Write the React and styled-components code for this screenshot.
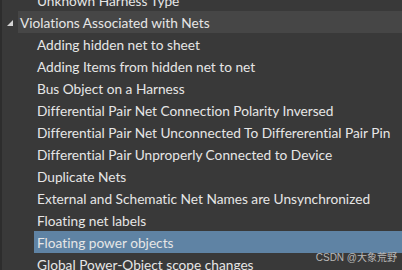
import styled, { createGlobalStyle } from "styled-components";

const GlobalStyle = createGlobalStyle`
  html, body {
    margin: 0;
    padding: 0;
    background: #393939;
    overflow: hidden;
  }
`;

const Panel = styled.div`
  position: relative;
  width: 402px;
  height: 270px;
  overflow: hidden;
  background: #393939;
  border-left: 2px solid #2d2d2d;
  box-sizing: border-box;
  font-family: Lato, "Noto Sans", sans-serif;
  font-size: 13.7px;
  font-variant-ligatures: none;
  color: #e6e6e6;
`;

const List = styled.div`
  display: flex;
  flex-direction: column;
  margin-top: -11px;
`;

const Row = styled.div`
  display: flex;
  align-items: center;
  height: 22px;
  margin-left: ${(p) => (p.$child ? 32 : 16)}px;
  padding-left: ${(p) => (p.$child ? 3 : 2)}px;
  background: ${(p) =>
    p.$selected ? "#5f83a4" : p.$hover ? "#464646" : "transparent"};
  white-space: nowrap;
`;

const Toggle = styled.svg`
  position: absolute;
  left: 5px;
  top: 20px;
`;

const Watermark = styled.div`
  position: absolute;
  right: 5px;
  bottom: 6px;
  font-family: "Liberation Sans", "Noto Sans CJK SC", sans-serif;
  font-size: 10px;
  color: #b8b8b8;
`;

const items = [
  "Adding hidden net to sheet",
  "Adding Items from hidden net to net",
  "Bus Object on a Harness",
  "Differential Pair Net Connection Polarity Inversed",
  "Differential Pair Net Unconnected To Differerential Pair Pin",
  "Differential Pair Unproperly Connected to Device",
  "Duplicate Nets",
  "External and Schematic Net Names are Unsynchronized",
  "Floating net labels",
  "Floating power objects",
  "Global Power-Object scope changes",
];

export default function App() {
  return (
    <>
      <GlobalStyle />
      <Panel>
        <List>
          <Row $child>Unknown Harness Type</Row>
          <Row $hover>Violations Associated with Nets</Row>
          {items.map((t) => (
            <Row key={t} $child $selected={t === "Floating power objects"}>
              {t}
            </Row>
          ))}
        </List>
        <Toggle width="6" height="6" viewBox="0 0 6 6">
          <polygon points="6,0 6,6 0,6" fill="#d4d4d4" />
        </Toggle>
        <Watermark>CSDN @大象荒野</Watermark>
      </Panel>
    </>
  );
}
